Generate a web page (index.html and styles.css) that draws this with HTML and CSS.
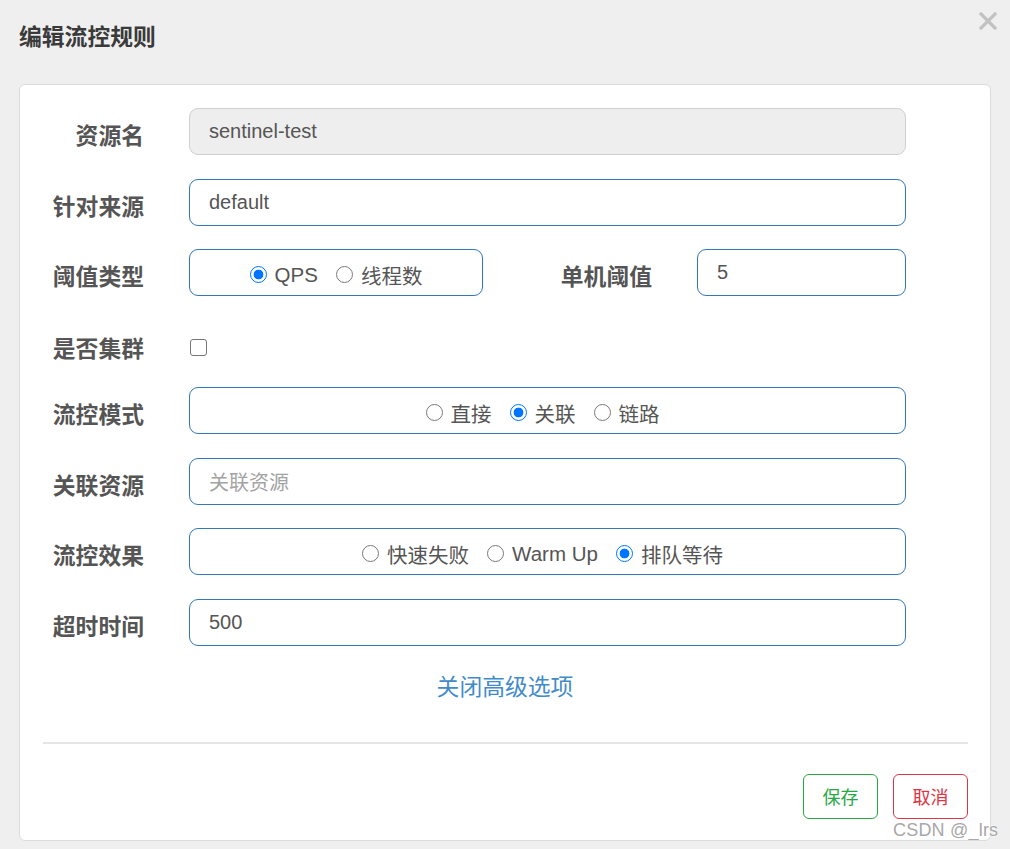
FILE: index.html
```html
<!DOCTYPE html>
<html lang="zh-CN">
<head>
<meta charset="utf-8">
<title>编辑流控规则</title>
<link rel="stylesheet" href="styles.css">
</head>
<body>
<div class="dialog">
  <div class="header">
    <h3 class="title">编辑流控规则</h3>
    <span class="close" aria-label="关闭">
      <svg width="18" height="18" viewBox="0 0 18 18"><path d="M2 2 L16 16 M16 2 L2 16" stroke="#c2c2c2" stroke-width="3.2" stroke-linecap="square"/></svg>
    </span>
  </div>
  <div class="panel">
    <div class="form">
      <div class="row">
        <label class="lbl">资源名</label>
        <div class="field disabled">sentinel-test</div>
      </div>
      <div class="row">
        <label class="lbl">针对来源</label>
        <div class="field">default</div>
      </div>
      <div class="row">
        <label class="lbl">阈值类型</label>
        <div class="field radios short">
          <label class="opt"><input type="radio" name="grade" checked>QPS</label>
          <label class="opt"><input type="radio" name="grade">线程数</label>
        </div>
        <label class="lbl lbl2">单机阈值</label>
        <div class="field count">5</div>
      </div>
      <div class="row row-check">
        <label class="lbl">是否集群</label>
        <input class="check" type="checkbox">
      </div>
      <div class="row">
        <label class="lbl">流控模式</label>
        <div class="field radios wide">
          <label class="opt"><input type="radio" name="mode">直接</label>
          <label class="opt"><input type="radio" name="mode" checked>关联</label>
          <label class="opt"><input type="radio" name="mode">链路</label>
        </div>
      </div>
      <div class="row">
        <label class="lbl">关联资源</label>
        <div class="field placeholder">关联资源</div>
      </div>
      <div class="row">
        <label class="lbl">流控效果</label>
        <div class="field radios wide">
          <label class="opt"><input type="radio" name="eff">快速失败</label>
          <label class="opt"><input type="radio" name="eff">Warm Up</label>
          <label class="opt"><input type="radio" name="eff" checked>排队等待</label>
        </div>
      </div>
      <div class="row">
        <label class="lbl">超时时间</label>
        <div class="field">500</div>
      </div>
    </div>
    <div class="toggle"><a class="link">关闭高级选项</a></div>
    <div class="divider"></div>
    <div class="footer">
      <button class="btn btn-save">保存</button>
      <button class="btn btn-cancel">取消</button>
    </div>
  </div>
  <div class="watermark">CSDN @_lrs</div>
</div>
</body>
</html>
```
FILE: styles.css
```css
* { box-sizing: border-box; }
html, body { margin: 0; padding: 0; }
body {
  background: #efefef;
  font-family: "Liberation Sans", Arial, "Noto Sans CJK SC", sans-serif;
  color: #555;
  width: 1010px;
  height: 849px;
  overflow: hidden;
}
.dialog { position: relative; width: 1010px; height: 849px; }
.header {
  height: 84px;
  display: flex;
  justify-content: space-between;
  align-items: flex-start;
  padding: 22px 13px 0 19px;
}
.title {
  margin: 0;
  font-size: 22.8px;
  line-height: 30px;
  font-weight: bold;
  color: #3a3a3a;
}
.close { display: block; margin-top: -10px; width: 18px; height: 18px; }
.close svg { display: block; }
.panel {
  margin-left: 19px;
  width: 972px;
  height: 757px;
  background: #fff;
  border: 1px solid #dcdcdc;
  border-radius: 6px;
  padding-top: 23px;
}
.form { display: flex; flex-direction: column; gap: 23.5px; }
.row { display: flex; align-items: flex-start; height: 47px; }
.lbl {
  width: 124px;
  height: 47px;
  padding-top: 6px;
  display: flex;
  align-items: center;
  justify-content: flex-end;
  font-size: 22.8px;
  font-weight: bold;
  color: #555;
  margin-right: 45px;
  flex: none;
}
.lbl2 { margin-left: 45px; }
.field {
  width: 717px;
  height: 47px;
  border: 1px solid #3477bb;
  border-radius: 9px;
  padding: 0 19px;
  display: flex;
  align-items: center;
  font-size: 20px;
  color: #555;
  flex: none;
}
.disabled { background: #eee; border-color: #cfcfcf; }
.placeholder { color: #a3a3a3; }
.short { width: 294px; }
.count { width: 209px; }
.radios { justify-content: center; gap: 18px; padding-top: 4px; font-size: 20.5px; }
.wide { padding-right: 29px; }
.opt { display: flex; align-items: center; color: #555; }
.opt input {
  -webkit-appearance: none;
  appearance: none;
  width: 17px;
  height: 17px;
  margin: 0 8px 1px 0;
  border: 1.5px solid #7a7a7a;
  border-radius: 50%;
  background: #fff;
  flex: none;
}
.opt input:checked {
  border: 1.5px solid #0075ff;
  background: radial-gradient(circle, #0075ff 0 4.6px, #fff 5.2px);
}
.row-check { height: 44px; }
.row-check .lbl { height: 44px; padding-top: 11px; }
.check {
  -webkit-appearance: none;
  appearance: none;
  width: 17px;
  height: 17px;
  margin: 19px 0 0 1px;
  border: 1.5px solid #767676;
  border-radius: 3px;
  background: #fff;
  flex: none;
}
.toggle {
  margin-top: 26px;
  text-align: center;
  line-height: 30px;
  height: 30px;
}
.link { color: #428bca; font-size: 22.8px; cursor: pointer; }
.divider {
  margin: 40px 22px 0 23px;
  height: 2px;
  background: #e5e5e5;
}
.footer {
  display: flex;
  justify-content: flex-end;
  gap: 15px;
  padding-right: 22px;
  margin-top: 30px;
}
.btn {
  width: 75px;
  height: 45px;
  background: #fff;
  border: 1px solid;
  border-radius: 6px;
  font-family: "Liberation Sans", "Noto Sans CJK SC", sans-serif;
  font-size: 18px;
  padding: 0;
}
.btn-save { color: #28a745; border-color: #28a745; }
.btn-cancel { color: #dc3545; border-color: #dc3545; }
.watermark {
  position: absolute;
  left: 893px;
  top: 818px;
  font-size: 18px;
  line-height: 24px;
  color: #a8a8a8;
  text-shadow: 0 0 2px #fff, 0 0 2px #fff;
  letter-spacing: 0.2px;
}
```
